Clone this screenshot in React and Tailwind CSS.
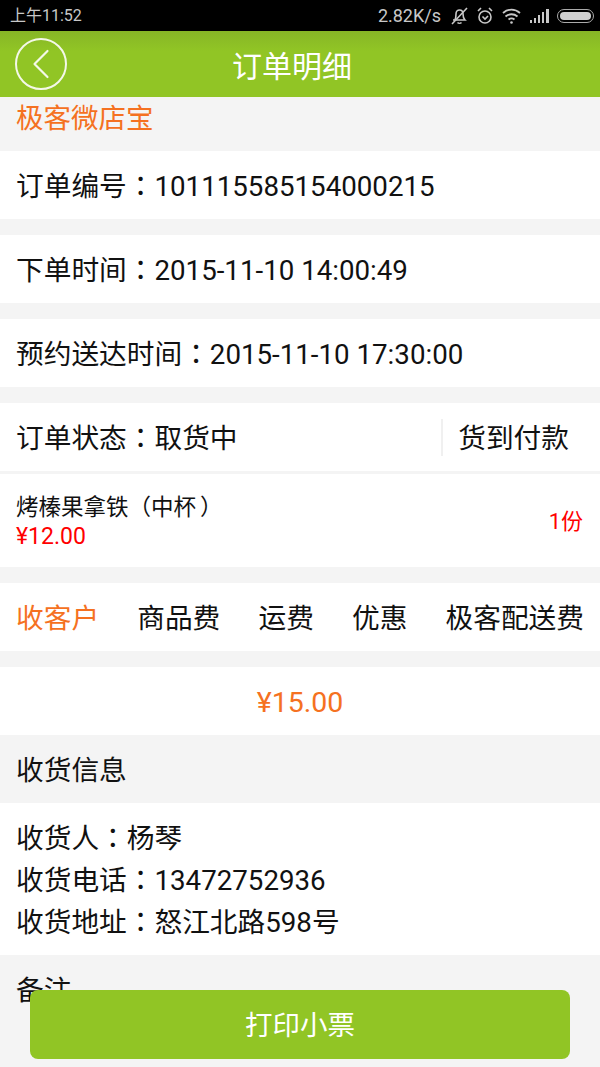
import React from 'react';
import { ChevronLeft } from 'lucide-react';

// the reference's full-width punctuation sits centred, which is the TC glyph
const Punct = ({ children }) => <span className="font-['Roboto','Noto_Sans_CJK_TC',sans-serif]">{children}</span>;

const Row = ({ children }) => (
  <div className="h-[68px] bg-white flex items-center pl-[16px] pt-[4px] text-[27.7px] text-[#111]">
    <span>{children}</span>
  </div>
);

const StatusBar = () => (
  <div className="h-[31px] bg-black flex items-center justify-between pl-[10px] pr-[6px] text-[#c8c8c8] text-[16px]">
    <span>上午11:52</span>
    <div className="flex items-center">
      <span className="mr-[9px] text-[18px]">2.82K/s</span>
      {/* muted bell */}
      <svg width="19" height="20" viewBox="0 0 19 20" fill="none" stroke="#c8c8c8" strokeWidth="1.6" className="mr-[8px]">
        <path d="M5 14c1-2 1-4 1-6 0-2.500 1.500-4 3.500-4s3.500 1.500 3.500 4c0 2 0 4 2 6H3z" />
        <path d="M7.500 16.500c1 1 3 1 4 0M2 18L17 2" />
      </svg>
      {/* alarm */}
      <svg width="16" height="18" viewBox="0 0 16 18" fill="none" stroke="#c8c8c8" strokeWidth="1.6" className="mr-[9px]">
        <circle cx="8" cy="10" r="6" />
        <path d="M5.500 9.500l2.500 2.500 3-3M1 4l3-3M15 4l-3-3" />
      </svg>
      {/* wifi */}
      <svg width="19" height="16" viewBox="0 0 19 16" fill="none" stroke="#c8c8c8" strokeWidth="1.8" className="mr-[9px]">
        <path d="M1 5c5-4.500 12-4.500 17 0M3.500 8.500c3.500-3 8.500-3 12 0M6.500 11.500c2-1.500 4-1.500 6 0" />
        <circle cx="9.500" cy="14.500" r="1.300" fill="#c8c8c8" stroke="none" />
      </svg>
      {/* signal */}
      <div className="flex items-end gap-[2px] h-[14px] mr-[8px]">
        <div className="w-[2px] h-[3px] bg-[#c8c8c8]" />
        <div className="w-[2px] h-[5px] bg-[#c8c8c8]" />
        <div className="w-[2px] h-[8px] bg-[#c8c8c8]" />
        <div className="w-[2px] h-[11px] bg-[#c8c8c8]" />
        <div className="w-[3px] h-[14px] bg-[#c8c8c8]" />
      </div>
      {/* battery */}
      <div className="w-[37px] h-[14px] rounded-[7px] border border-[#aaa] p-[2px]">
        <div className="w-full h-full rounded-[4px] bg-[#d0d0d0]" />
      </div>
    </div>
  </div>
);

const Header = () => (
  <div className="h-[66px] flex items-center pl-[15px] bg-gradient-to-b from-[#87b626] to-[#91c525] to-[30%]">
    <div className="w-[52px] h-[52px] rounded-full border-[2px] border-[#f4f8e8] flex items-center justify-center">
      <ChevronLeft size={52} strokeWidth={1} color="#f4f8e8" className="shrink-0" />
    </div>
    <div className="flex-1 pl-[165px] pt-[4px] text-[30px] text-white">订单明细</div>
  </div>
);

export default function App() {
  const tabs = ['商品费', '运费', '优惠', '极客配送费'];

  return (
    <div className="relative h-[1067px] overflow-hidden bg-[#f4f4f4] font-['Roboto','Noto_Sans_CJK_SC',sans-serif]">
      <StatusBar />
      <Header />

      <div className="h-[54px] pl-[16px] pt-[3px] text-[27.5px] leading-[38px] text-[#f57121]">极客微店宝</div>

      <div className="flex flex-col gap-[16px]">
        <Row>订单编号<Punct>：</Punct>101115585154000215</Row>
        <Row>下单时间<Punct>：</Punct>2015-11-10 14:00:49</Row>
        <Row>预约送达时间<Punct>：</Punct>2015-11-10 17:30:00</Row>
      </div>

      <div className="mt-[16px] h-[68px] bg-white flex items-center justify-between pl-[16px] pr-[31px] text-[27.7px] text-[#111]">
        <span className="pt-[4px]">订单状态<Punct>：</Punct>取货中</span>
        <div className="h-[37px] border-l-2 border-[#f0f0f0] pl-[15px] flex items-center pt-[4px]">货到付款</div>
      </div>

      <div className="mt-[3px] h-[93px] bg-white flex items-center justify-between pl-[16px] pr-[17px]">
        <div className="pt-[2px]">
          <div className="text-[22.5px] leading-[30px] text-[#111]">烤榛果拿铁<Punct>（</Punct>中杯<span className="pl-[4px]"><Punct>）</Punct></span></div>
          <div className="text-[23px] leading-[30px] text-[#ff0000]">¥12.00</div>
        </div>
        <span className="pt-[2px] text-[22px] text-[#ff0000]">1份</span>
      </div>

      <div className="mt-[16px] h-[68px] bg-white flex items-center justify-between pl-[16px] pr-[16px] pt-[4px] text-[27.7px] text-[#111]">
        <span className="text-[#f57121]">收客户</span>
        {tabs.map((t) => (
          <span key={t}>{t}</span>
        ))}
      </div>

      <div className="mt-[16px] h-[68px] bg-white flex items-center justify-center pt-[4px] text-[28.5px] text-[#f57121]">¥15.00</div>

      <div className="h-[68px] flex items-center pl-[16px] pt-[4px] text-[27.7px] text-[#111]">收货信息</div>

      <div className="h-[152px] bg-white flex flex-col justify-center pl-[16px] pt-[4px] text-[27.7px] leading-[42px] text-[#111]">
        <div>收货人<Punct>：</Punct>杨琴</div>
        <div>收货电话<Punct>：</Punct>13472752936</div>
        <div>收货地址<Punct>：</Punct>怒江北路598号</div>
      </div>

      <div className="h-[68px] flex items-center pl-[16px] pt-[4px] text-[27.7px] text-[#111]">备注</div>

      <button className="absolute left-[30px] top-[990px] w-[540px] h-[69px] rounded-[8px] bg-[#91c525] pt-[2px] text-white text-[27.5px]">
        打印小票
      </button>
    </div>
  );
}
